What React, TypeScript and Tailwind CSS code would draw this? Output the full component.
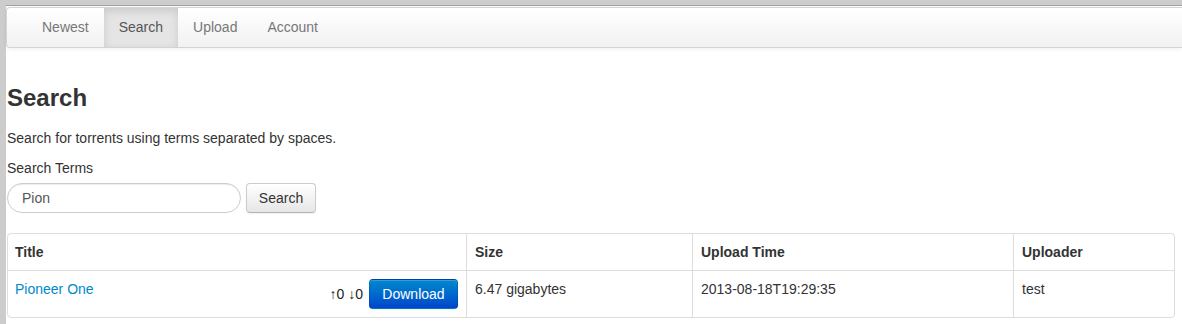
import React, { useState } from 'react';

const navItems = ['Newest', 'Search', 'Upload', 'Account'];

const columns = [
  { label: 'Title', width: 'w-[458px]' },
  { label: 'Size', width: 'w-[226px]' },
  { label: 'Upload Time', width: 'w-[321px]' },
  { label: 'Uploader', width: 'flex-1' },
];

const App = () => {
  const [query, setQuery] = useState('Pion');
  const active = 'Search';

  return (
    <div className="flex min-h-[324px] overflow-hidden bg-white font-['Liberation_Sans',Arial,sans-serif] text-[14px] leading-5 text-[#333]">
      <div className="w-[6px] shrink-0 bg-[#ccc]" />
      <div className="flex-1 min-w-0">
        <div className="h-[6px] bg-[#ccc] border-b border-[#a3a3a3]" />

        {/* navbar */}
        <div className="mt-px h-[41px] rounded-l-[4px] border border-r-0 border-[#d4d4d4] bg-gradient-to-b from-white to-[#f2f2f2] pl-5 shadow-[0_1px_4px_rgba(0,0,0,0.065)]">
          <ul className="flex h-full">
            {navItems.map((item) => (
              <li key={item}>
                <a
                  className={`block h-full px-[15px] pt-[9px] ${item === active ? 'bg-[#e5e5e5] text-[#555] shadow-[inset_0_3px_8px_rgba(0,0,0,0.125)]' : 'text-[#777]'}`}
                >
                  {item}
                </a>
              </li>
            ))}
          </ul>
        </div>

        <div className="pl-px pr-[7px]">
          <h2 className="mt-[32px] h-9 text-[24px] font-bold leading-9 text-[#333]">Search</h2>
          <p className="mt-3">Search for torrents using terms separated by spaces.</p>

          <label className="mt-[10px] mb-[5px] block">Search Terms</label>
          <div className="flex items-center gap-[5px]">
            <input
              value={query}
              onChange={(e) => setQuery(e.target.value)}
              className="h-[30px] w-[234px] rounded-[15px] border border-[#ccc] px-[14px] text-[#555] shadow-[inset_0_1px_1px_rgba(0,0,0,0.075)] outline-none"
            />
            <button className="h-[30px] w-[70px] rounded-[4px] border border-[#ccc] border-b-[#b3b3b3] bg-gradient-to-b from-white to-[#e6e6e6] text-[#333] shadow-[inset_0_1px_0_rgba(255,255,255,0.2),0_1px_2px_rgba(0,0,0,0.05)]">
              Search
            </button>
          </div>

          {/* results */}
          <div className="mt-5 rounded-[4px] border border-[#ddd]">
            <div className="flex border-b border-[#ddd] font-bold">
              {columns.map((c, i) => (
                <div key={c.label} className={`${c.width} py-2 ${i > 0 ? 'border-l border-[#ddd] px-2' : 'pl-[7px] pr-2'}`}>
                  {c.label}
                </div>
              ))}
            </div>
            <div className="flex">
              <div className="w-[458px] py-2 pl-[7px] pr-2 flex justify-between items-start">
                <a className="text-[#0088cc]">Pioneer One</a>
                <span className="flex items-baseline gap-1">
                  <span className="mr-0.5 text-[#222]">↑0 ↓0</span>
                  <button className="h-[30px] w-[89px] rounded-[4px] border border-[rgba(0,0,0,0.1)] bg-gradient-to-b from-[#0088cc] to-[#0044cc] text-white shadow-[inset_0_1px_0_rgba(255,255,255,0.2),0_1px_2px_rgba(0,0,0,0.05)]">
                    Download
                  </button>
                </span>
              </div>
              <div className="w-[226px] border-l border-[#ddd] p-2">6.47 gigabytes</div>
              <div className="w-[321px] border-l border-[#ddd] p-2">2013-08-18T19:29:35</div>
              <div className="flex-1 border-l border-[#ddd] p-2">test</div>
            </div>
          </div>
        </div>
      </div>
    </div>
  );
};

export default App;
